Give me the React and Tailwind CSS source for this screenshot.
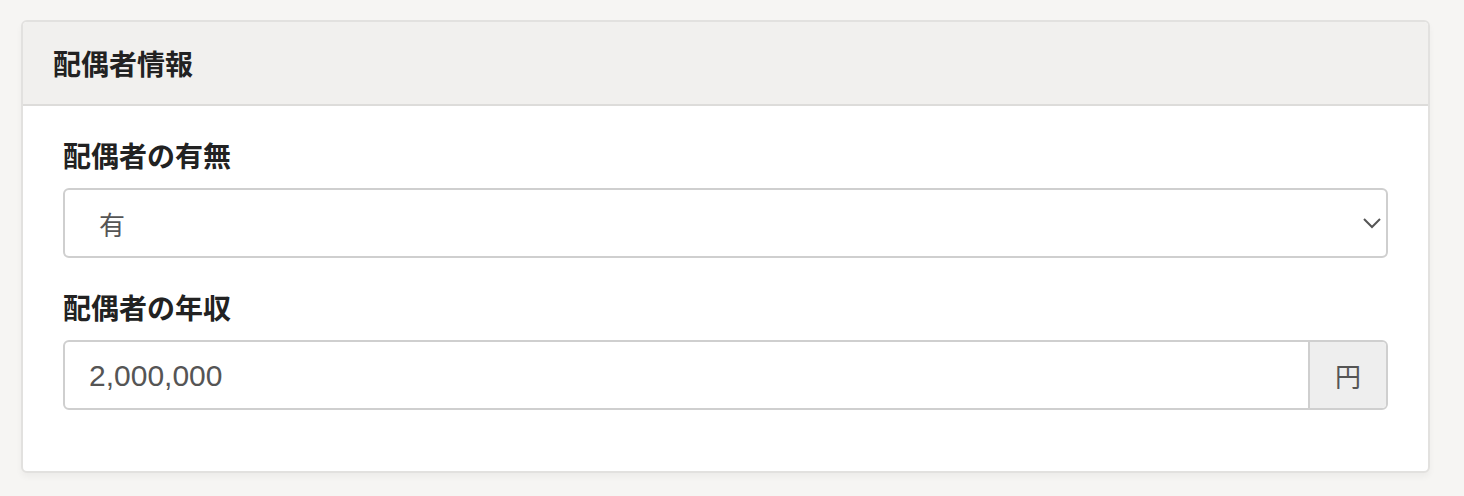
import * as React from "react";

const jp = "font-['Noto_Sans_CJK_JP','Noto_Sans',sans-serif]";

export default function App() {
  const [hasSpouse, setHasSpouse] = React.useState("有");
  const [income, setIncome] = React.useState("2,000,000");

  return (
    <div className={`min-h-[496px] bg-[#f6f5f3] pt-[20px] pl-[21px] ${jp}`}>
      <section className="w-[1409px] rounded-[6px] border-2 border-[#e2e1df] bg-white shadow-[0_4px_6px_rgba(0,0,0,0.04)] overflow-hidden">
        <div className="h-[84px] flex items-center px-[30px] bg-[#f1f0ee] border-b-2 border-[#dddcda]">
          <h2 className="text-[28px] font-bold text-[#222] leading-none">配偶者情報</h2>
        </div>

        <div className="px-[40px] pt-[29px] pb-[61px]">
          <label className="block text-[28px] font-bold text-[#222] leading-[40px]">
            配偶者の有無
          </label>
          <div className="relative mt-[13px]">
            <select
              value={hasSpouse}
              onChange={(e) => setHasSpouse(e.target.value)}
              className={`appearance-none w-full h-[70px] rounded-[6px] border-2 border-[#cfcfcf] bg-white pl-[34px] text-[26px] text-[#555] outline-none ${jp}`}
            >
              <option>有</option>
              <option>無</option>
            </select>
            <svg
              className="pointer-events-none absolute right-[6px] top-[29px]"
              width="20"
              height="12"
              viewBox="0 0 20 12"
              fill="none"
            >
              <path d="M2 2l8 8 8-8" stroke="#555" strokeWidth="2" />
            </svg>
          </div>

          <label className="block mt-[29px] text-[28px] font-bold text-[#222] leading-[40px]">
            配偶者の年収
          </label>
          <div className="mt-[13px] flex h-[70px] rounded-[6px] border-2 border-[#cfcfcf] overflow-hidden">
            <input
              value={income}
              onChange={(e) => setIncome(e.target.value)}
              className="flex-1 min-w-0 px-[24px] text-[30px] text-[#555] outline-none font-['Liberation_Sans',sans-serif]"
            />
            <div className="w-[78px] flex items-center justify-center bg-[#eeeeee] border-l-2 border-[#cfcfcf] text-[26px] text-[#555]">
              円
            </div>
          </div>
        </div>
      </section>
    </div>
  );
}
